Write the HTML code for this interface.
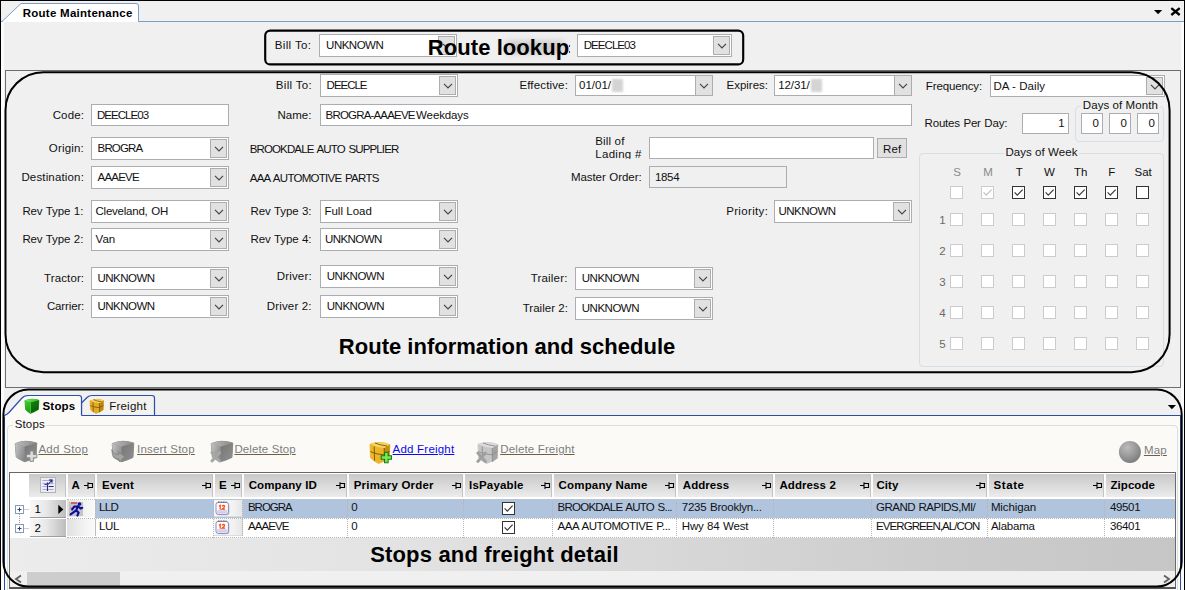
<!DOCTYPE html><html><head><meta charset="utf-8"><title>Route Maintenance</title><style>
html,body{margin:0;padding:0;overflow:hidden}
#w{position:absolute;left:0;top:0;width:1185px;height:590px;overflow:hidden;background:#f0f0f0}
body{width:1185px;height:590px;overflow:hidden;background:#f0f0f0;position:relative;font-family:"Liberation Sans",sans-serif;font-size:11.5px}
#w>div,#w>svg,#w>span{position:absolute;box-sizing:content-box}
span.t{white-space:pre;line-height:1;display:block}
span.u{text-decoration:underline;text-underline-offset:0.6px;text-decoration-thickness:1.2px;text-decoration-color:#6f6040}
span.ub{text-decoration:underline;text-underline-offset:0.6px;text-decoration-thickness:1.2px;text-decoration-color:#0a0af0}
</style></head><body><div id="w">
<div style="left:0;top:0;width:1185px;height:1px;background:#000"></div>
<div style="left:0;top:0;width:1px;height:590px;background:#000"></div>
<div style="left:1px;top:22px;width:3px;height:568px;background:#fcfcfc"></div>
<div style="left:1181px;top:22px;width:3px;height:568px;background:#fcfcfc"></div>
<div style="left:1184px;top:0;width:1px;height:590px;background:#000"></div>
<div style="left:1px;top:21px;width:1183px;height:1px;background:#7d9ec4"></div>
<svg style="left:0;top:0" width="145" height="24" viewBox="0 0 145 24"><path d="M2 21.5 L21 3.5 L136 3.5 Q138.5 3.5 138.5 6 L138.5 21.5" fill="#fff" stroke="#7d9ec4" stroke-width="1"/><rect x="3" y="21" width="135" height="1" fill="#fff"/></svg>
<svg style="left:1150px;top:5px" width="34" height="14" viewBox="0 0 34 14"><path d="M4 5 L12.2 5 L8.1 9.2 Z" fill="#000"/><path d="M21.3 3.2 L29.7 10 M29.7 3.2 L21.3 10" stroke="#000" stroke-width="2.3" fill="none"/></svg>
<div style="left:319px;top:34px;width:136px;height:21px;background:#fff;border:1px solid #abadb3;"></div>
<div style="left:438px;top:36px;width:15px;height:17px;background:#e1e1e1;border:1px solid #adadad;"></div>
<svg style="left:441.5px;top:42.0px" width="10" height="8" viewBox="0 0 10 8"><path d="M1 1.9 L5 5.9 L9 1.9" fill="none" stroke="#444" stroke-width="1.15"/></svg>
<div style="left:577px;top:34px;width:153px;height:21px;background:#fff;border:1px solid #abadb3;"></div>
<div style="left:713px;top:36px;width:15px;height:17px;background:#e1e1e1;border:1px solid #adadad;"></div>
<svg style="left:716.5px;top:42.0px" width="10" height="8" viewBox="0 0 10 8"><path d="M1 1.9 L5 5.9 L9 1.9" fill="none" stroke="#444" stroke-width="1.15"/></svg>
<div style="left:5px;top:70px;width:1174px;height:316px;border:1px solid #6e6e6e"></div>
<div style="left:320px;top:74px;width:136px;height:21px;background:#fff;border:1px solid #abadb3;"></div>
<div style="left:439px;top:76px;width:15px;height:17px;background:#e1e1e1;border:1px solid #adadad;"></div>
<svg style="left:442.5px;top:82.0px" width="10" height="8" viewBox="0 0 10 8"><path d="M1 1.9 L5 5.9 L9 1.9" fill="none" stroke="#444" stroke-width="1.15"/></svg>
<div style="left:575px;top:75px;width:136px;height:19px;background:#fff;border:1px solid #abadb3;"></div>
<div style="left:695px;top:75px;width:16px;height:19px;background:#e1e1e1;border:1px solid #adadad;"></div>
<svg style="left:699.0px;top:82.0px" width="10" height="8" viewBox="0 0 10 8"><path d="M1 1.9 L5 5.9 L9 1.9" fill="none" stroke="#444" stroke-width="1.15"/></svg>
<div style="left:774px;top:75px;width:136px;height:19px;background:#fff;border:1px solid #abadb3;"></div>
<div style="left:894px;top:75px;width:16px;height:19px;background:#e1e1e1;border:1px solid #adadad;"></div>
<svg style="left:898.0px;top:82.0px" width="10" height="8" viewBox="0 0 10 8"><path d="M1 1.9 L5 5.9 L9 1.9" fill="none" stroke="#444" stroke-width="1.15"/></svg>
<div style="left:990px;top:75px;width:173px;height:20px;background:#fff;border:1px solid #abadb3;"></div>
<div style="left:1146px;top:77px;width:15px;height:16px;background:#e1e1e1;border:1px solid #adadad;"></div>
<svg style="left:1149.5px;top:82.5px" width="10" height="8" viewBox="0 0 10 8"><path d="M1 1.9 L5 5.9 L9 1.9" fill="none" stroke="#444" stroke-width="1.15"/></svg>
<div style="left:612px;top:79px;width:11px;height:13px;background:#d4d4d4;filter:blur(1.2px)"></div>
<div style="left:811px;top:79px;width:11px;height:13px;background:#d4d4d4;filter:blur(1.2px)"></div>
<div style="left:91px;top:104px;width:136px;height:20px;background:#fff;border:1px solid #abadb3;"></div>
<div style="left:320px;top:104px;width:590px;height:20px;background:#fff;border:1px solid #abadb3;"></div>
<div style="left:1022px;top:113px;width:45px;height:19px;background:#fff;border:1px solid #abadb3;"></div>
<div style="left:1075px;top:106px;width:87px;height:34px;border:1px solid #d5dfe5;border-radius:4px"></div>
<div style="left:1081px;top:100px;width:79px;height:12px;background:#f0f0f0"></div>
<div style="left:1081px;top:113px;width:20px;height:19px;background:#fff;border:1px solid #abadb3;"></div>
<div style="left:1109px;top:113px;width:20px;height:19px;background:#fff;border:1px solid #abadb3;"></div>
<div style="left:1137px;top:113px;width:20px;height:19px;background:#fff;border:1px solid #abadb3;"></div>
<div style="left:91px;top:137px;width:136px;height:21px;background:#fff;border:1px solid #abadb3;"></div>
<div style="left:210px;top:139px;width:15px;height:17px;background:#e1e1e1;border:1px solid #adadad;"></div>
<svg style="left:213.5px;top:145.0px" width="10" height="8" viewBox="0 0 10 8"><path d="M1 1.9 L5 5.9 L9 1.9" fill="none" stroke="#444" stroke-width="1.15"/></svg>
<div style="left:590px;top:134px;width:56px;height:24.5px;overflow:hidden"></div>
<div style="left:649px;top:137px;width:223px;height:20px;background:#fff;border:1px solid #abadb3;"></div>
<div style="left:877px;top:138px;width:28px;height:18px;background:#e1e1e1;border:1px solid #adadad;"></div>
<div style="left:91px;top:166px;width:136px;height:21px;background:#fff;border:1px solid #abadb3;"></div>
<div style="left:210px;top:168px;width:15px;height:17px;background:#e1e1e1;border:1px solid #adadad;"></div>
<svg style="left:213.5px;top:174.0px" width="10" height="8" viewBox="0 0 10 8"><path d="M1 1.9 L5 5.9 L9 1.9" fill="none" stroke="#444" stroke-width="1.15"/></svg>
<div style="left:649px;top:166px;width:136px;height:20px;background:#f0f0f0;border:1px solid #abadb3;"></div>
<div style="left:91px;top:200px;width:136px;height:21px;background:#fff;border:1px solid #abadb3;"></div>
<div style="left:210px;top:202px;width:15px;height:17px;background:#e1e1e1;border:1px solid #adadad;"></div>
<svg style="left:213.5px;top:208.0px" width="10" height="8" viewBox="0 0 10 8"><path d="M1 1.9 L5 5.9 L9 1.9" fill="none" stroke="#444" stroke-width="1.15"/></svg>
<div style="left:91px;top:228px;width:136px;height:21px;background:#fff;border:1px solid #abadb3;"></div>
<div style="left:210px;top:230px;width:15px;height:17px;background:#e1e1e1;border:1px solid #adadad;"></div>
<svg style="left:213.5px;top:236.0px" width="10" height="8" viewBox="0 0 10 8"><path d="M1 1.9 L5 5.9 L9 1.9" fill="none" stroke="#444" stroke-width="1.15"/></svg>
<div style="left:320px;top:200px;width:136px;height:21px;background:#fff;border:1px solid #abadb3;"></div>
<div style="left:439px;top:202px;width:15px;height:17px;background:#e1e1e1;border:1px solid #adadad;"></div>
<svg style="left:442.5px;top:208.0px" width="10" height="8" viewBox="0 0 10 8"><path d="M1 1.9 L5 5.9 L9 1.9" fill="none" stroke="#444" stroke-width="1.15"/></svg>
<div style="left:320px;top:228px;width:136px;height:21px;background:#fff;border:1px solid #abadb3;"></div>
<div style="left:439px;top:230px;width:15px;height:17px;background:#e1e1e1;border:1px solid #adadad;"></div>
<svg style="left:442.5px;top:236.0px" width="10" height="8" viewBox="0 0 10 8"><path d="M1 1.9 L5 5.9 L9 1.9" fill="none" stroke="#444" stroke-width="1.15"/></svg>
<div style="left:774px;top:200px;width:136px;height:21px;background:#fff;border:1px solid #abadb3;"></div>
<div style="left:893px;top:202px;width:15px;height:17px;background:#e1e1e1;border:1px solid #adadad;"></div>
<svg style="left:896.5px;top:208.0px" width="10" height="8" viewBox="0 0 10 8"><path d="M1 1.9 L5 5.9 L9 1.9" fill="none" stroke="#444" stroke-width="1.15"/></svg>
<div style="left:91px;top:267px;width:136px;height:21px;background:#fff;border:1px solid #abadb3;"></div>
<div style="left:210px;top:269px;width:15px;height:17px;background:#e1e1e1;border:1px solid #adadad;"></div>
<svg style="left:213.5px;top:275.0px" width="10" height="8" viewBox="0 0 10 8"><path d="M1 1.9 L5 5.9 L9 1.9" fill="none" stroke="#444" stroke-width="1.15"/></svg>
<div style="left:91px;top:295px;width:136px;height:21px;background:#fff;border:1px solid #abadb3;"></div>
<div style="left:210px;top:297px;width:15px;height:17px;background:#e1e1e1;border:1px solid #adadad;"></div>
<svg style="left:213.5px;top:303.0px" width="10" height="8" viewBox="0 0 10 8"><path d="M1 1.9 L5 5.9 L9 1.9" fill="none" stroke="#444" stroke-width="1.15"/></svg>
<div style="left:320px;top:265px;width:136px;height:21px;background:#fff;border:1px solid #abadb3;"></div>
<div style="left:439px;top:267px;width:15px;height:17px;background:#e1e1e1;border:1px solid #adadad;"></div>
<svg style="left:442.5px;top:273.0px" width="10" height="8" viewBox="0 0 10 8"><path d="M1 1.9 L5 5.9 L9 1.9" fill="none" stroke="#444" stroke-width="1.15"/></svg>
<div style="left:320px;top:295px;width:136px;height:21px;background:#fff;border:1px solid #abadb3;"></div>
<div style="left:439px;top:297px;width:15px;height:17px;background:#e1e1e1;border:1px solid #adadad;"></div>
<svg style="left:442.5px;top:303.0px" width="10" height="8" viewBox="0 0 10 8"><path d="M1 1.9 L5 5.9 L9 1.9" fill="none" stroke="#444" stroke-width="1.15"/></svg>
<div style="left:575px;top:267px;width:136px;height:21px;background:#fff;border:1px solid #abadb3;"></div>
<div style="left:694px;top:269px;width:15px;height:17px;background:#e1e1e1;border:1px solid #adadad;"></div>
<svg style="left:697.5px;top:275.0px" width="10" height="8" viewBox="0 0 10 8"><path d="M1 1.9 L5 5.9 L9 1.9" fill="none" stroke="#444" stroke-width="1.15"/></svg>
<div style="left:575px;top:297px;width:136px;height:21px;background:#fff;border:1px solid #abadb3;"></div>
<div style="left:694px;top:299px;width:15px;height:17px;background:#e1e1e1;border:1px solid #adadad;"></div>
<svg style="left:697.5px;top:305.0px" width="10" height="8" viewBox="0 0 10 8"><path d="M1 1.9 L5 5.9 L9 1.9" fill="none" stroke="#444" stroke-width="1.15"/></svg>
<div style="left:919px;top:153px;width:243px;height:212px;border:1px solid #d5dfe5;border-radius:4px"></div>
<div style="left:1004px;top:148px;width:75px;height:12px;background:#f0f0f0"></div>
<div style="left:950px;top:186px;width:11px;height:11px;background:#fff;border:1px solid #cccccc"></div>
<div style="left:981px;top:186px;width:11px;height:11px;background:#fff;border:1px solid #cccccc"></div>
<svg style="left:981px;top:186px" width="13" height="13" viewBox="0 0 13 13"><path d="M2.6 6.4 L5.3 9.2 L10.6 3.6" fill="none" stroke="#c0c0c0" stroke-width="1.2"/></svg>
<div style="left:1012px;top:186px;width:11px;height:11px;background:#fff;border:1px solid #333333"></div>
<svg style="left:1012px;top:186px" width="13" height="13" viewBox="0 0 13 13"><path d="M2.6 6.4 L5.3 9.2 L10.6 3.6" fill="none" stroke="#3a3a3a" stroke-width="1.2"/></svg>
<div style="left:1043px;top:186px;width:11px;height:11px;background:#fff;border:1px solid #333333"></div>
<svg style="left:1043px;top:186px" width="13" height="13" viewBox="0 0 13 13"><path d="M2.6 6.4 L5.3 9.2 L10.6 3.6" fill="none" stroke="#3a3a3a" stroke-width="1.2"/></svg>
<div style="left:1074px;top:186px;width:11px;height:11px;background:#fff;border:1px solid #333333"></div>
<svg style="left:1074px;top:186px" width="13" height="13" viewBox="0 0 13 13"><path d="M2.6 6.4 L5.3 9.2 L10.6 3.6" fill="none" stroke="#3a3a3a" stroke-width="1.2"/></svg>
<div style="left:1105px;top:186px;width:11px;height:11px;background:#fff;border:1px solid #333333"></div>
<svg style="left:1105px;top:186px" width="13" height="13" viewBox="0 0 13 13"><path d="M2.6 6.4 L5.3 9.2 L10.6 3.6" fill="none" stroke="#3a3a3a" stroke-width="1.2"/></svg>
<div style="left:1136px;top:186px;width:11px;height:11px;background:#fff;border:1px solid #333333"></div>
<div style="left:950px;top:213px;width:11px;height:11px;background:#fff;border:1px solid #cccccc"></div>
<div style="left:981px;top:213px;width:11px;height:11px;background:#fff;border:1px solid #cccccc"></div>
<div style="left:1012px;top:213px;width:11px;height:11px;background:#fff;border:1px solid #cccccc"></div>
<div style="left:1043px;top:213px;width:11px;height:11px;background:#fff;border:1px solid #cccccc"></div>
<div style="left:1074px;top:213px;width:11px;height:11px;background:#fff;border:1px solid #cccccc"></div>
<div style="left:1105px;top:213px;width:11px;height:11px;background:#fff;border:1px solid #cccccc"></div>
<div style="left:1136px;top:213px;width:11px;height:11px;background:#fff;border:1px solid #cccccc"></div>
<div style="left:950px;top:244px;width:11px;height:11px;background:#fff;border:1px solid #cccccc"></div>
<div style="left:981px;top:244px;width:11px;height:11px;background:#fff;border:1px solid #cccccc"></div>
<div style="left:1012px;top:244px;width:11px;height:11px;background:#fff;border:1px solid #cccccc"></div>
<div style="left:1043px;top:244px;width:11px;height:11px;background:#fff;border:1px solid #cccccc"></div>
<div style="left:1074px;top:244px;width:11px;height:11px;background:#fff;border:1px solid #cccccc"></div>
<div style="left:1105px;top:244px;width:11px;height:11px;background:#fff;border:1px solid #cccccc"></div>
<div style="left:1136px;top:244px;width:11px;height:11px;background:#fff;border:1px solid #cccccc"></div>
<div style="left:950px;top:275px;width:11px;height:11px;background:#fff;border:1px solid #cccccc"></div>
<div style="left:981px;top:275px;width:11px;height:11px;background:#fff;border:1px solid #cccccc"></div>
<div style="left:1012px;top:275px;width:11px;height:11px;background:#fff;border:1px solid #cccccc"></div>
<div style="left:1043px;top:275px;width:11px;height:11px;background:#fff;border:1px solid #cccccc"></div>
<div style="left:1074px;top:275px;width:11px;height:11px;background:#fff;border:1px solid #cccccc"></div>
<div style="left:1105px;top:275px;width:11px;height:11px;background:#fff;border:1px solid #cccccc"></div>
<div style="left:1136px;top:275px;width:11px;height:11px;background:#fff;border:1px solid #cccccc"></div>
<div style="left:950px;top:306px;width:11px;height:11px;background:#fff;border:1px solid #cccccc"></div>
<div style="left:981px;top:306px;width:11px;height:11px;background:#fff;border:1px solid #cccccc"></div>
<div style="left:1012px;top:306px;width:11px;height:11px;background:#fff;border:1px solid #cccccc"></div>
<div style="left:1043px;top:306px;width:11px;height:11px;background:#fff;border:1px solid #cccccc"></div>
<div style="left:1074px;top:306px;width:11px;height:11px;background:#fff;border:1px solid #cccccc"></div>
<div style="left:1105px;top:306px;width:11px;height:11px;background:#fff;border:1px solid #cccccc"></div>
<div style="left:1136px;top:306px;width:11px;height:11px;background:#fff;border:1px solid #cccccc"></div>
<div style="left:950px;top:337px;width:11px;height:11px;background:#fff;border:1px solid #cccccc"></div>
<div style="left:981px;top:337px;width:11px;height:11px;background:#fff;border:1px solid #cccccc"></div>
<div style="left:1012px;top:337px;width:11px;height:11px;background:#fff;border:1px solid #cccccc"></div>
<div style="left:1043px;top:337px;width:11px;height:11px;background:#fff;border:1px solid #cccccc"></div>
<div style="left:1074px;top:337px;width:11px;height:11px;background:#fff;border:1px solid #cccccc"></div>
<div style="left:1105px;top:337px;width:11px;height:11px;background:#fff;border:1px solid #cccccc"></div>
<div style="left:1136px;top:337px;width:11px;height:11px;background:#fff;border:1px solid #cccccc"></div>
<div style="left:506px;top:41px;width:58px;height:13px;background:#bdbdbd;filter:blur(3px);opacity:0.75"></div>
<div style="left:568.5px;top:44.5px;width:1.6px;height:2px;background:#2a3a9a"></div><div style="left:568.5px;top:50.5px;width:1.6px;height:2px;background:#2a3a9a"></div>
<div style="left:5px;top:415px;width:1177px;height:175px;background:#fbfaf7"></div>
<div style="left:4px;top:415px;width:1px;height:175px;background:#2b4fa0"></div>
<div style="left:1180px;top:415px;width:1px;height:175px;background:#2b4fa0"></div>
<div style="left:4px;top:415px;width:1177px;height:1px;background:#2b4fa0"></div>
<svg style="left:0px;top:392px" width="170" height="26" viewBox="0 392 170 26">
<path d="M81.5 403 Q85 399.5 87 397.5 Q89 395.5 92 395.5 L152 395.5 Q154.5 395.5 154.5 398 L154.5 415.5 L81.5 415.5 Z" fill="#f3f2ee" stroke="#2b4db0" stroke-width="1.2"/>
<path d="M4.5 417 L4.5 415.5 Q7 414.5 9 412.5 L21.5 398.5 Q24 395.5 28 395.5 L79 395.5 Q81.5 395.5 81.5 398 L81.5 417 Z" fill="#fbfaf7"/>
<path d="M4.5 415.5 Q7 414.5 9 412.5 L21.5 398.5 Q24 395.5 28 395.5 L79 395.5 Q81.5 395.5 81.5 398 L81.5 415.5" fill="none" stroke="#2b4db0" stroke-width="1.2"/>
</svg>
<svg style="left:24px;top:398px" width="16" height="16" viewBox="0 0 16 16">
<defs><linearGradient id="gL" x1="0" y1="0" x2="0.3" y2="1"><stop offset="0" stop-color="#46d436"/><stop offset="1" stop-color="#1c9a10"/></linearGradient>
<linearGradient id="gR" x1="0" y1="0" x2="0.6" y2="1"><stop offset="0" stop-color="#128a0a"/><stop offset="1" stop-color="#075c04"/></linearGradient>
<linearGradient id="gT" x1="0" y1="0" x2="1" y2="0.4"><stop offset="0" stop-color="#8cf07a"/><stop offset="1" stop-color="#2fb822"/></linearGradient></defs>
<path d="M0.9 2.6 Q8 -0.2 15 2.2 L14.4 11.6 Q10.5 14.2 6.4 15.4 Q3 13.6 1.6 11.6 Z" fill="#1a9a10" stroke="#1a9a10" stroke-width="0.6" stroke-linejoin="round"/>
<path d="M6.2 4.6 L15 2.2 L14.4 11.6 L6.4 15.4 Z" fill="url(#gR)"/>
<path d="M0.9 2.6 L6.2 4.6 L6.4 15.4 L1.6 11.6 Z" fill="url(#gL)"/>
<path d="M0.9 2.6 Q8 -0.2 15 2.2 L6.2 4.6 Z" fill="url(#gT)"/>
<path d="M6.3 4.8 L6.4 15" stroke="#7cf06a" stroke-width="0.7" opacity="0.8"/>
</svg>
<svg style="left:88.5px;top:398px" width="16" height="16" viewBox="0 0 16 16">
<path d="M0.9 2.8 Q8 -0.2 14.6 2.6 L14.2 11.8 Q10.5 14.4 7 15.6 Q3.5 14 1.6 11.8 Z" fill="#e4aa22" stroke="#e4aa22" stroke-width="0.6" stroke-linejoin="round"/>
<path d="M10.4 5.2 L14.6 2.6 L14.2 11.8 L10.6 14.2 Z" fill="#c08612"/>
<path d="M0.9 2.8 Q8 -0.2 14.6 2.6 L10.4 5.2 Q5 5 0.9 2.8 Z" fill="#f4cf58"/>
<path d="M4 4.2 L4.3 13.6 M10.4 5.2 L10.6 14.2 M1.2 7.6 Q6 9.6 10.5 9.6 L14.4 7.4 M4.6 1.6 Q8 3.4 12.6 3.8" stroke="#6e5410" stroke-width="0.9" fill="none" opacity="0.85"/>
</svg>
<svg style="left:1166px;top:403px" width="12" height="8" viewBox="0 0 12 8"><path d="M1.8 2 L10 2 L5.9 6.2 Z" fill="#000"/></svg>
<div style="left:7px;top:425px;width:1169px;height:170px;border:1px solid #d5dfe5;border-radius:4px"></div>
<div style="left:13px;top:419px;width:33px;height:12px;background:#fbfaf7"></div>
<svg style="left:14px;top:439px" width="24" height="25" viewBox="0 0 24 25"><defs><linearGradient id="ctadd" x1="0" y1="0" x2="1" y2="0"><stop offset="0" stop-color="#bcbcbc"/><stop offset="1" stop-color="#888"/></linearGradient><linearGradient id="cladd" x1="0" y1="0" x2="1" y2="0.6"><stop offset="0" stop-color="#c6c6c6"/><stop offset="1" stop-color="#8a8a8a"/></linearGradient><linearGradient id="cradd" x1="0" y1="0" x2="1" y2="1"><stop offset="0" stop-color="#767676"/><stop offset="1" stop-color="#909090"/></linearGradient></defs><path d="M1.2 4.6 Q11 0.2 22.8 4 L22 18.4 Q16 21.5 10.6 22.8 Q5 20.5 2.2 18 Z" fill="#8a8a8a" stroke="#8a8a8a" stroke-width="0.8" stroke-linejoin="round"/><path d="M10.5 7.5 L22.8 4 L22 18.4 L10.6 22.8 Z" fill="url(#cradd)"/><path d="M1.2 4.6 L10.5 7.5 L10.6 22.8 L2.2 18 Z" fill="url(#cladd)"/><path d="M1.2 4.6 Q11 0 22.8 4 L10.5 7.5 Z" fill="url(#ctadd)"/><path d="M16 12 h3.4 v3.4 h3.5 v3.4 h-3.5 v3.6 h-3.4 v-3.6 h-3.5 v-3.4 h3.5 Z" fill="#dcdcdc" stroke="#8c8c8c" stroke-width="1"/></svg>
<svg style="left:111px;top:439px" width="24" height="25" viewBox="0 0 24 25"><defs><linearGradient id="ctins" x1="0" y1="0" x2="1" y2="0"><stop offset="0" stop-color="#bcbcbc"/><stop offset="1" stop-color="#888"/></linearGradient><linearGradient id="clins" x1="0" y1="0" x2="1" y2="0.6"><stop offset="0" stop-color="#c6c6c6"/><stop offset="1" stop-color="#8a8a8a"/></linearGradient><linearGradient id="crins" x1="0" y1="0" x2="1" y2="1"><stop offset="0" stop-color="#767676"/><stop offset="1" stop-color="#909090"/></linearGradient></defs><path d="M1.2 4.6 Q11 0.2 22.8 4 L22 18.4 Q16 21.5 10.6 22.8 Q5 20.5 2.2 18 Z" fill="#8a8a8a" stroke="#8a8a8a" stroke-width="0.8" stroke-linejoin="round"/><path d="M10.5 7.5 L22.8 4 L22 18.4 L10.6 22.8 Z" fill="url(#crins)"/><path d="M1.2 4.6 L10.5 7.5 L10.6 22.8 L2.2 18 Z" fill="url(#clins)"/><path d="M1.2 4.6 Q11 0 22.8 4 L10.5 7.5 Z" fill="url(#ctins)"/><path d="M0.8 10.5 Q2.5 15.5 7.5 15.8 L7.2 12.8 L13.8 17.6 L8.4 23 L8 20.2 Q1 20.5 0.8 10.5 Z" fill="#a4a4a4" stroke="#7c7c7c" stroke-width="0.7"/></svg>
<svg style="left:210px;top:439px" width="24" height="25" viewBox="0 0 24 25"><defs><linearGradient id="ctdel" x1="0" y1="0" x2="1" y2="0"><stop offset="0" stop-color="#bcbcbc"/><stop offset="1" stop-color="#888"/></linearGradient><linearGradient id="cldel" x1="0" y1="0" x2="1" y2="0.6"><stop offset="0" stop-color="#c6c6c6"/><stop offset="1" stop-color="#8a8a8a"/></linearGradient><linearGradient id="crdel" x1="0" y1="0" x2="1" y2="1"><stop offset="0" stop-color="#767676"/><stop offset="1" stop-color="#909090"/></linearGradient></defs><path d="M1.2 4.6 Q11 0.2 22.8 4 L22 18.4 Q16 21.5 10.6 22.8 Q5 20.5 2.2 18 Z" fill="#8a8a8a" stroke="#8a8a8a" stroke-width="0.8" stroke-linejoin="round"/><path d="M10.5 7.5 L22.8 4 L22 18.4 L10.6 22.8 Z" fill="url(#crdel)"/><path d="M1.2 4.6 L10.5 7.5 L10.6 22.8 L2.2 18 Z" fill="url(#cldel)"/><path d="M1.2 4.6 Q11 0 22.8 4 L10.5 7.5 Z" fill="url(#ctdel)"/><path d="M2 13.5 L9.5 22 M9.5 13.5 L2 22" stroke="#a6a6a6" stroke-width="3" stroke-linecap="round"/></svg>
<svg style="left:369px;top:439.5px" width="24" height="25" viewBox="0 0 24 25"><path d="M1 4.2 Q11 0.6 20.8 4.6 L20.4 18.2 Q15 21.6 9.6 23.6 Q4.5 21 1.6 18 Z" fill="#ecb426" stroke="#ecb426" stroke-width="0.8" stroke-linejoin="round"/><path d="M15.2 8 L20.8 4.6 L20.4 18.2 L15.4 22 Z" fill="#c88e14"/><path d="M1 4.2 Q11 0.6 20.8 4.6 L15.2 8 Q8 7.6 1 4.2 Z" fill="#f6d45e"/><path d="M5.2 6.4 L5.6 20.6 M15.2 8 L15.4 22 M1.3 11.6 Q8 14.6 15.3 14.8 L20.6 11.2 M6 3 Q11 5.2 18.2 6" stroke="#6a5210" stroke-width="1" fill="none" opacity="0.85"/></svg>
<svg style="left:380px;top:451px" width="13" height="13" viewBox="0 0 13 13"><path d="M4.6 1.3 h3.5 v3.4 h3.4 v3.5 h-3.4 v3.5 h-3.5 v-3.5 h-3.4 v-3.5 h3.4 Z" fill="#86e45a" stroke="#0f7f0f" stroke-width="1.1"/></svg>
<svg style="left:477px;top:439.5px" width="24" height="25" viewBox="0 0 24 25"><path d="M1 4.2 Q11 0.6 20.8 4.6 L20.4 18.2 Q15 21.6 9.6 23.6 Q4.5 21 1.6 18 Z" fill="#c6c6c6" stroke="#c6c6c6" stroke-width="0.8" stroke-linejoin="round"/><path d="M15.2 8 L20.8 4.6 L20.4 18.2 L15.4 22 Z" fill="#a4a4a4"/><path d="M1 4.2 Q11 0.6 20.8 4.6 L15.2 8 Q8 7.6 1 4.2 Z" fill="#dcdcdc"/><path d="M5.2 6.4 L5.6 20.6 M15.2 8 L15.4 22 M1.3 11.6 Q8 14.6 15.3 14.8 L20.6 11.2 M6 3 Q11 5.2 18.2 6" stroke="#8a8a8a" stroke-width="1" fill="none" opacity="0.85"/></svg>
<svg style="left:476px;top:451px" width="12" height="12" viewBox="0 0 12 12"><path d="M1.8 2 L9.5 10.5 M9.5 2 L1.8 10.5" stroke="#a0a0a0" stroke-width="2.8" stroke-linecap="round"/></svg>
<svg style="left:1118px;top:440px" width="24" height="24" viewBox="0 0 24 24"><defs><radialGradient id="mg" cx="0.38" cy="0.3" r="0.72"><stop offset="0" stop-color="#bcbcbc"/><stop offset="0.55" stop-color="#9a9a9a"/><stop offset="1" stop-color="#7c7c7c"/></radialGradient></defs><circle cx="11.9" cy="12" r="11" fill="url(#mg)"/></svg>
<div style="left:9px;top:472px;width:1167px;height:116px;background:#fff"></div>
<div style="left:10px;top:538px;width:1165px;height:33px;background:linear-gradient(90deg,#ececec 0%,#e2e2e2 35%,#cccccc 80%,#c6c6c6 100%)"></div>
<div style="left:29px;top:474px;width:1146px;height:23px;background:linear-gradient(180deg,#c9c9c9 0%,#d6d6d6 40%,#ececec 100%)"></div>
<div style="left:9px;top:472px;width:1167px;height:1px;background:#666"></div>
<div style="left:9px;top:472px;width:1px;height:116px;background:#6a6a6a"></div>
<div style="left:1175px;top:472px;width:1px;height:116px;background:#6a6a6a"></div>
<div style="left:9px;top:587px;width:1167px;height:2px;background:#555"></div>
<div style="left:65px;top:474px;width:1px;height:23px;background:#c2c2c2"></div>
<div style="left:66px;top:474px;width:2px;height:23px;background:#fbfbfb"></div>
<div style="left:94px;top:474px;width:1px;height:23px;background:#c2c2c2"></div>
<div style="left:95px;top:474px;width:2px;height:23px;background:#fbfbfb"></div>
<svg style="left:84px;top:482px" width="10" height="8" viewBox="0 0 10 8"><path d="M0 3.5 H3.5 M4 0.3 V7 M4 1.5 H8.5 V5.5 H4" stroke="#000" stroke-width="1.1" fill="none"/></svg>
<div style="left:212px;top:474px;width:1px;height:23px;background:#c2c2c2"></div>
<div style="left:213px;top:474px;width:2px;height:23px;background:#fbfbfb"></div>
<svg style="left:202px;top:482px" width="10" height="8" viewBox="0 0 10 8"><path d="M0 3.5 H3.5 M4 0.3 V7 M4 1.5 H8.5 V5.5 H4" stroke="#000" stroke-width="1.1" fill="none"/></svg>
<div style="left:241px;top:474px;width:1px;height:23px;background:#c2c2c2"></div>
<div style="left:242px;top:474px;width:2px;height:23px;background:#fbfbfb"></div>
<svg style="left:231px;top:482px" width="10" height="8" viewBox="0 0 10 8"><path d="M0 3.5 H3.5 M4 0.3 V7 M4 1.5 H8.5 V5.5 H4" stroke="#000" stroke-width="1.1" fill="none"/></svg>
<div style="left:346px;top:474px;width:1px;height:23px;background:#c2c2c2"></div>
<div style="left:347px;top:474px;width:2px;height:23px;background:#fbfbfb"></div>
<svg style="left:336px;top:482px" width="10" height="8" viewBox="0 0 10 8"><path d="M0 3.5 H3.5 M4 0.3 V7 M4 1.5 H8.5 V5.5 H4" stroke="#000" stroke-width="1.1" fill="none"/></svg>
<div style="left:462px;top:474px;width:1px;height:23px;background:#c2c2c2"></div>
<div style="left:463px;top:474px;width:2px;height:23px;background:#fbfbfb"></div>
<svg style="left:452px;top:482px" width="10" height="8" viewBox="0 0 10 8"><path d="M0 3.5 H3.5 M4 0.3 V7 M4 1.5 H8.5 V5.5 H4" stroke="#000" stroke-width="1.1" fill="none"/></svg>
<div style="left:551px;top:474px;width:1px;height:23px;background:#c2c2c2"></div>
<div style="left:552px;top:474px;width:2px;height:23px;background:#fbfbfb"></div>
<svg style="left:541px;top:482px" width="10" height="8" viewBox="0 0 10 8"><path d="M0 3.5 H3.5 M4 0.3 V7 M4 1.5 H8.5 V5.5 H4" stroke="#000" stroke-width="1.1" fill="none"/></svg>
<div style="left:675px;top:474px;width:1px;height:23px;background:#c2c2c2"></div>
<div style="left:676px;top:474px;width:2px;height:23px;background:#fbfbfb"></div>
<svg style="left:665px;top:482px" width="10" height="8" viewBox="0 0 10 8"><path d="M0 3.5 H3.5 M4 0.3 V7 M4 1.5 H8.5 V5.5 H4" stroke="#000" stroke-width="1.1" fill="none"/></svg>
<div style="left:772px;top:474px;width:1px;height:23px;background:#c2c2c2"></div>
<div style="left:773px;top:474px;width:2px;height:23px;background:#fbfbfb"></div>
<svg style="left:762px;top:482px" width="10" height="8" viewBox="0 0 10 8"><path d="M0 3.5 H3.5 M4 0.3 V7 M4 1.5 H8.5 V5.5 H4" stroke="#000" stroke-width="1.1" fill="none"/></svg>
<div style="left:870px;top:474px;width:1px;height:23px;background:#c2c2c2"></div>
<div style="left:871px;top:474px;width:2px;height:23px;background:#fbfbfb"></div>
<svg style="left:860px;top:482px" width="10" height="8" viewBox="0 0 10 8"><path d="M0 3.5 H3.5 M4 0.3 V7 M4 1.5 H8.5 V5.5 H4" stroke="#000" stroke-width="1.1" fill="none"/></svg>
<div style="left:986px;top:474px;width:1px;height:23px;background:#c2c2c2"></div>
<div style="left:987px;top:474px;width:2px;height:23px;background:#fbfbfb"></div>
<svg style="left:976px;top:482px" width="10" height="8" viewBox="0 0 10 8"><path d="M0 3.5 H3.5 M4 0.3 V7 M4 1.5 H8.5 V5.5 H4" stroke="#000" stroke-width="1.1" fill="none"/></svg>
<div style="left:1103px;top:474px;width:1px;height:23px;background:#c2c2c2"></div>
<div style="left:1104px;top:474px;width:2px;height:23px;background:#fbfbfb"></div>
<svg style="left:1093px;top:482px" width="10" height="8" viewBox="0 0 10 8"><path d="M0 3.5 H3.5 M4 0.3 V7 M4 1.5 H8.5 V5.5 H4" stroke="#000" stroke-width="1.1" fill="none"/></svg>
<svg style="left:40px;top:477px" width="17" height="17" viewBox="0 0 17 17"><rect x="0.5" y="0.5" width="15" height="15" fill="#ececf6" stroke="#b4b4b4"/><path d="M2.5 3.5 H13.5 M2.5 6.5 H13.5 M2.5 9.5 H13.5 M2.5 12.5 H13.5" stroke="#a9a9dc" stroke-width="1"/><path d="M7.5 14 V5.5 M4.5 7.5 L8.5 7 L11.5 3.5 M9 3 L12 2.8 L12 5.8 M9 9.5 H13.5" stroke="#2a2a7a" stroke-width="1.1" fill="none"/></svg>
<div style="left:96px;top:499px;width:1079px;height:19px;background:#b0c4de"></div>
<div style="left:30px;top:500px;width:36px;height:17px;background:linear-gradient(90deg,#f8f8f8 0%,#e8e8e8 45%,#bcbcbc 100%);border-bottom:1px solid #9c9c9c"></div>
<div style="left:67px;top:500px;width:28px;height:17px;background:linear-gradient(90deg,#e0e0e0 0%,#f2f2f2 60%,#fafafa 100%);border-right:1px solid #c8c8c8"></div>
<div style="left:214px;top:500px;width:28px;height:16px;background:linear-gradient(90deg,#f8f8f8 0%,#f2f2f2 70%,#e6e6e6 100%);border-right:1px solid #d4d4d4;border-bottom:1px solid #dcdcdc"></div>
<svg style="left:215px;top:501px" width="16" height="15" viewBox="0 0 16 15"><rect x="1.8" y="2.2" width="12.6" height="12" rx="2.2" fill="#55557a" opacity="0.35"/><rect x="1" y="1.4" width="12.4" height="12" rx="2.2" fill="#fff" stroke="#8a88c2" stroke-width="1"/><path d="M3 1.2 H11.6" stroke="#74747c" stroke-width="1.5" stroke-dasharray="1.6 0.9"/><rect x="2.2" y="9.3" width="10" height="3.1" fill="#c6c4ee"/><path d="M2.2 10.9 H12.2" stroke="#e8e6fb" stroke-width="0.7"/><path d="M4 5.3 L5.2 4.5 V8.4 M7 5.3 Q8.2 3.9 9.6 5 Q10 6.1 7.1 8.2 H10.2" stroke="#ff4610" stroke-width="1.25" fill="none"/></svg>
<svg style="left:13px;top:503px" width="18" height="12" viewBox="0 0 18 12"><path d="M11.5 6.5 H16" stroke="#9a9a9a" stroke-width="1" stroke-dasharray="1 1"/><rect x="2.5" y="2.5" width="8" height="8" fill="#fff" stroke="#8a9bb0"/><path d="M4.5 6.5 H8.5 M6.5 4.5 V8.5" stroke="#2a3f9a" stroke-width="1"/></svg>
<div style="left:502px;top:502px;width:11px;height:11px;background:#fff;border:1px solid #333333"></div>
<svg style="left:502px;top:502px" width="13" height="13" viewBox="0 0 13 13"><path d="M2.6 6.4 L5.3 9.2 L10.6 3.6" fill="none" stroke="#3a3a3a" stroke-width="1.2"/></svg>
<div style="left:30px;top:519px;width:36px;height:17px;background:linear-gradient(90deg,#f8f8f8 0%,#e8e8e8 45%,#bcbcbc 100%);border-bottom:1px solid #9c9c9c"></div>
<div style="left:67px;top:519px;width:28px;height:17px;background:linear-gradient(90deg,#e0e0e0 0%,#f2f2f2 60%,#fafafa 100%);border-right:1px solid #c8c8c8"></div>
<div style="left:214px;top:519px;width:28px;height:16px;background:linear-gradient(90deg,#f8f8f8 0%,#f2f2f2 70%,#e6e6e6 100%);border-right:1px solid #d4d4d4;border-bottom:1px solid #dcdcdc"></div>
<svg style="left:215px;top:520px" width="16" height="15" viewBox="0 0 16 15"><rect x="1.8" y="2.2" width="12.6" height="12" rx="2.2" fill="#55557a" opacity="0.35"/><rect x="1" y="1.4" width="12.4" height="12" rx="2.2" fill="#fff" stroke="#8a88c2" stroke-width="1"/><path d="M3 1.2 H11.6" stroke="#74747c" stroke-width="1.5" stroke-dasharray="1.6 0.9"/><rect x="2.2" y="9.3" width="10" height="3.1" fill="#c6c4ee"/><path d="M2.2 10.9 H12.2" stroke="#e8e6fb" stroke-width="0.7"/><path d="M4 5.3 L5.2 4.5 V8.4 M7 5.3 Q8.2 3.9 9.6 5 Q10 6.1 7.1 8.2 H10.2" stroke="#ff4610" stroke-width="1.25" fill="none"/></svg>
<svg style="left:13px;top:522px" width="18" height="12" viewBox="0 0 18 12"><path d="M11.5 6.5 H16" stroke="#9a9a9a" stroke-width="1" stroke-dasharray="1 1"/><rect x="2.5" y="2.5" width="8" height="8" fill="#fff" stroke="#8a9bb0"/><path d="M4.5 6.5 H8.5 M6.5 4.5 V8.5" stroke="#2a3f9a" stroke-width="1"/></svg>
<div style="left:502px;top:521px;width:11px;height:11px;background:#fff;border:1px solid #333333"></div>
<svg style="left:502px;top:521px" width="13" height="13" viewBox="0 0 13 13"><path d="M2.6 6.4 L5.3 9.2 L10.6 3.6" fill="none" stroke="#3a3a3a" stroke-width="1.2"/></svg>
<div style="left:19px;top:514px;width:1px;height:9px;border-left:1px dotted #9a9a9a"></div>
<svg style="left:57px;top:504px" width="8" height="11" viewBox="0 0 8 11"><path d="M1.3 0.8 L6.3 5.4 L1.3 10 Z" fill="#000"/></svg>
<svg style="left:68px;top:501px" width="16" height="16" viewBox="0 0 16 16"><rect x="1" y="1" width="14" height="14" fill="#c4c4c4"/><path d="M3 2 H9" stroke="#e02020" stroke-width="1.2"/><path d="M2 7 H4" stroke="#e06060" stroke-width="1"/><circle cx="11.5" cy="3" r="1.8" fill="#0c0c9c"/><path d="M10 5.2 L6.2 5.6 L4.2 8.4 M10 5.2 L8.2 9.4 L10.6 11.6 L9.4 14.6 M8.2 9.4 L5.4 11.4 L2.6 13.4 M10 5.2 L12.6 7.6 L14.2 6.8" stroke="#0c0c9c" stroke-width="2.1" fill="none" stroke-linecap="round" stroke-linejoin="round"/></svg>
<div style="left:95px;top:499px;width:0;height:39px;border-left:1px dotted #b4b4b4"></div>
<div style="left:213px;top:499px;width:0;height:39px;border-left:1px dotted #b4b4b4"></div>
<div style="left:242px;top:499px;width:0;height:39px;border-left:1px dotted #b4b4b4"></div>
<div style="left:347px;top:499px;width:0;height:39px;border-left:1px dotted #b4b4b4"></div>
<div style="left:463px;top:499px;width:0;height:39px;border-left:1px dotted #b4b4b4"></div>
<div style="left:552px;top:499px;width:0;height:39px;border-left:1px dotted #b4b4b4"></div>
<div style="left:676px;top:499px;width:0;height:39px;border-left:1px dotted #b4b4b4"></div>
<div style="left:773px;top:499px;width:0;height:39px;border-left:1px dotted #b4b4b4"></div>
<div style="left:871px;top:499px;width:0;height:39px;border-left:1px dotted #b4b4b4"></div>
<div style="left:987px;top:499px;width:0;height:39px;border-left:1px dotted #b4b4b4"></div>
<div style="left:1104px;top:499px;width:0;height:39px;border-left:1px dotted #b4b4b4"></div>
<div style="left:67px;top:499px;width:1108px;height:0;border-top:1px dotted #c4c4c4"></div>
<div style="left:67px;top:518px;width:1108px;height:0;border-top:1px dotted #b4b4b4"></div>
<div style="left:67px;top:537px;width:1108px;height:0;border-top:1px dotted #b4b4b4"></div>
<div style="left:10px;top:571px;width:1165px;height:16px;background:#f0f0f0"></div>
<div style="left:27px;top:572px;width:93px;height:14px;background:#cdcdcd"></div>
<svg style="left:14px;top:574px" width="9" height="10" viewBox="0 0 9 10"><path d="M7 1.5 L2 5 L7 8.5" stroke="#606060" stroke-width="1.8" fill="none"/></svg>
<svg style="left:1162px;top:574px" width="9" height="10" viewBox="0 0 9 10"><path d="M2 1.5 L7 5 L2 8.5" stroke="#606060" stroke-width="1.8" fill="none"/></svg>
<span id="t0" class="t" style="top:8px;font-size:11.5px;color:#000;font-weight:bold;letter-spacing:0.263px;left:22.70px;">Route Maintenance</span>
<span id="t1" class="t" style="top:40px;font-size:11.5px;color:#111;letter-spacing:0.379px;left:274.70px;">Bill To:</span>
<span id="t2" class="t" style="top:40px;font-size:11.5px;color:#111;letter-spacing:-0.500px;left:326.10px;">UNKNOWN</span>
<span id="t3" class="t" style="top:40px;font-size:11.5px;color:#111;letter-spacing:-0.939px;left:583.70px;">DEECLE03</span>
<span id="t4" class="t" style="top:80px;font-size:11.5px;color:#111;letter-spacing:0.316px;left:275.80px;">Bill To:</span>
<span id="t5" class="t" style="top:80px;font-size:11.5px;color:#111;letter-spacing:-1.022px;left:326.60px;">DEECLE</span>
<span id="t6" class="t" style="top:80px;font-size:11.5px;color:#111;letter-spacing:0.151px;left:519.40px;">Effective:</span>
<span id="t7" class="t" style="top:80px;font-size:11.5px;color:#111;letter-spacing:0.019px;left:579.00px;">01/01/</span>
<span id="t8" class="t" style="top:80px;font-size:11.5px;color:#111;letter-spacing:-0.031px;left:726.60px;">Expires:</span>
<span id="t9" class="t" style="top:80px;font-size:11.5px;color:#111;letter-spacing:-0.114px;left:778.30px;">12/31/</span>
<span id="t10" class="t" style="top:81px;font-size:11.5px;color:#111;letter-spacing:-0.133px;left:925.80px;">Frequency:</span>
<span id="t11" class="t" style="top:81px;font-size:11.5px;color:#111;letter-spacing:0.058px;left:993.40px;">DA - Daily</span>
<span id="t12" class="t" style="top:110px;font-size:11.5px;color:#111;letter-spacing:0.123px;left:52.70px;">Code:</span>
<span id="t13" class="t" style="top:110px;font-size:11.5px;color:#111;letter-spacing:-0.964px;left:97.00px;">DEECLE03</span>
<span id="t14" class="t" style="top:110px;font-size:11.5px;color:#111;letter-spacing:-0.035px;left:277.60px;">Name:</span>
<span id="t15" class="t" style="top:110px;font-size:11.5px;color:#111;letter-spacing:-0.823px;left:325.60px;">BROGRA-AAAEVE</span>
<span id="t16" class="t" style="top:110px;font-size:11.5px;color:#111;letter-spacing:-0.123px;left:416.10px;">Weekdays</span>
<span id="t17" class="t" style="top:118px;font-size:11.5px;color:#111;letter-spacing:-0.198px;word-spacing:0.598px;left:924.60px;">Routes Per Day:</span>
<span id="t18" class="t" style="top:118px;font-size:11.5px;color:#111;right:120.40px;">1</span>
<span id="t19" class="t" style="top:100px;font-size:11.5px;color:#111;letter-spacing:0.080px;left:1082.80px;">Days of Month</span>
<span id="t20" class="t" style="top:118px;font-size:11.5px;color:#111;right:86.20px;">0</span>
<span id="t21" class="t" style="top:118px;font-size:11.5px;color:#111;right:58.20px;">0</span>
<span id="t22" class="t" style="top:118px;font-size:11.5px;color:#111;right:30.20px;">0</span>
<span id="t23" class="t" style="top:143px;font-size:11.5px;color:#111;letter-spacing:0.189px;left:48.80px;">Origin:</span>
<span id="t24" class="t" style="top:143px;font-size:11.5px;color:#111;letter-spacing:-0.857px;left:97.60px;">BROGRA</span>
<span id="t25" class="t" style="top:144px;font-size:11.5px;color:#111;letter-spacing:-0.860px;word-spacing:1.260px;left:249.70px;">BROOKDALE AUTO SUPPLIER</span>
<span id="t26" class="t" style="top:136px;font-size:11.5px;color:#111;letter-spacing:0.154px;left:595.30px;">Bill of</span>
<span id="t27" class="t" style="top:149px;font-size:11.5px;color:#111;letter-spacing:0.272px;left:595.30px;height:9.60px;overflow:hidden;">Lading #</span>
<span id="t28" class="t" style="top:144px;font-size:11.5px;color:#111;letter-spacing:0.265px;left:882.90px;">Ref</span>
<span id="t29" class="t" style="top:172px;font-size:11.5px;color:#111;letter-spacing:0.155px;left:21.40px;">Destination:</span>
<span id="t30" class="t" style="top:172px;font-size:11.5px;color:#111;letter-spacing:-0.805px;left:97.60px;">AAAEVE</span>
<span id="t31" class="t" style="top:173px;font-size:11.5px;color:#111;letter-spacing:-0.724px;word-spacing:1.124px;left:249.70px;">AAA AUTOMOTIVE PARTS</span>
<span id="t32" class="t" style="top:172px;font-size:11.5px;color:#111;letter-spacing:-0.053px;word-spacing:0.453px;left:570.90px;">Master Order:</span>
<span id="t33" class="t" style="top:172px;font-size:11.5px;color:#111;letter-spacing:-0.348px;left:655.00px;">1854</span>
<span id="t34" class="t" style="top:206px;font-size:11.5px;color:#111;letter-spacing:-0.128px;word-spacing:0.528px;left:22.40px;">Rev Type 1:</span>
<span id="t35" class="t" style="top:206px;font-size:11.5px;color:#111;letter-spacing:-0.225px;word-spacing:0.625px;left:95.50px;">Cleveland, OH</span>
<span id="t36" class="t" style="top:234px;font-size:11.5px;color:#111;letter-spacing:-0.128px;word-spacing:0.528px;left:22.40px;">Rev Type 2:</span>
<span id="t37" class="t" style="top:234px;font-size:11.5px;color:#111;letter-spacing:0.064px;left:95.50px;">Van</span>
<span id="t38" class="t" style="top:206px;font-size:11.5px;color:#111;letter-spacing:-0.128px;word-spacing:0.528px;left:250.60px;">Rev Type 3:</span>
<span id="t39" class="t" style="top:206px;font-size:11.5px;color:#111;letter-spacing:0.021px;left:324.40px;">Full Load</span>
<span id="t40" class="t" style="top:234px;font-size:11.5px;color:#111;letter-spacing:-0.128px;word-spacing:0.528px;left:250.60px;">Rev Type 4:</span>
<span id="t41" class="t" style="top:234px;font-size:11.5px;color:#111;letter-spacing:-0.529px;left:324.90px;">UNKNOWN</span>
<span id="t42" class="t" style="top:206px;font-size:11.5px;color:#111;letter-spacing:0.335px;left:726.20px;">Priority:</span>
<span id="t43" class="t" style="top:206px;font-size:11.5px;color:#111;letter-spacing:-0.500px;left:778.40px;">UNKNOWN</span>
<span id="t44" class="t" style="top:273px;font-size:11.5px;color:#111;letter-spacing:0.125px;left:44.00px;">Tractor:</span>
<span id="t45" class="t" style="top:273px;font-size:11.5px;color:#111;letter-spacing:-0.500px;left:97.40px;">UNKNOWN</span>
<span id="t46" class="t" style="top:301px;font-size:11.5px;color:#111;letter-spacing:-0.130px;left:46.90px;">Carrier:</span>
<span id="t47" class="t" style="top:301px;font-size:11.5px;color:#111;letter-spacing:-0.500px;left:97.40px;">UNKNOWN</span>
<span id="t48" class="t" style="top:271px;font-size:11.5px;color:#111;letter-spacing:0.175px;left:276.70px;">Driver:</span>
<span id="t49" class="t" style="top:271px;font-size:11.5px;color:#111;letter-spacing:-0.500px;left:326.80px;">UNKNOWN</span>
<span id="t50" class="t" style="top:301px;font-size:11.5px;color:#111;letter-spacing:0.172px;left:266.70px;">Driver 2:</span>
<span id="t51" class="t" style="top:301px;font-size:11.5px;color:#111;letter-spacing:-0.500px;left:326.80px;">UNKNOWN</span>
<span id="t52" class="t" style="top:273px;font-size:11.5px;color:#111;letter-spacing:0.193px;left:530.70px;">Trailer:</span>
<span id="t53" class="t" style="top:273px;font-size:11.5px;color:#111;letter-spacing:-0.500px;left:581.80px;">UNKNOWN</span>
<span id="t54" class="t" style="top:303px;font-size:11.5px;color:#111;letter-spacing:0.025px;left:522.70px;">Trailer 2:</span>
<span id="t55" class="t" style="top:303px;font-size:11.5px;color:#111;letter-spacing:-0.500px;left:581.80px;">UNKNOWN</span>
<span id="t56" class="t" style="top:147px;font-size:11.5px;color:#111;letter-spacing:0.060px;left:1005.40px;">Days of Week</span>
<span id="t57" class="t" style="top:167px;font-size:11.5px;color:#8a8a8a;left:907.1px;width:100px;text-align:center;">S</span>
<span id="t58" class="t" style="top:167px;font-size:11.5px;color:#8a8a8a;left:938px;width:100px;text-align:center;">M</span>
<span id="t59" class="t" style="top:167px;font-size:11.5px;color:#111;left:969.2px;width:100px;text-align:center;">T</span>
<span id="t60" class="t" style="top:167px;font-size:11.5px;color:#111;left:999.5px;width:100px;text-align:center;">W</span>
<span id="t61" class="t" style="top:167px;font-size:11.5px;color:#111;left:1030.6px;width:100px;text-align:center;">Th</span>
<span id="t62" class="t" style="top:167px;font-size:11.5px;color:#111;left:1061.8px;width:100px;text-align:center;">F</span>
<span id="t63" class="t" style="top:167px;font-size:11.5px;color:#111;left:1093.2px;width:100px;text-align:center;">Sat</span>
<span id="t64" class="t" style="top:215px;font-size:11.5px;color:#6a6a6a;left:939.20px;">1</span>
<span id="t65" class="t" style="top:246px;font-size:11.5px;color:#6a6a6a;left:939.20px;">2</span>
<span id="t66" class="t" style="top:277px;font-size:11.5px;color:#6a6a6a;left:939.20px;">3</span>
<span id="t67" class="t" style="top:308px;font-size:11.5px;color:#6a6a6a;left:939.20px;">4</span>
<span id="t68" class="t" style="top:339px;font-size:11.5px;color:#6a6a6a;left:939.20px;">5</span>
<span id="t69" class="t" style="top:37px;font-size:22px;color:#000;font-weight:bold;letter-spacing:0.062px;left:427.85px;">Route lookup</span>
<span id="t70" class="t" style="top:336px;font-size:22px;color:#000;font-weight:bold;letter-spacing:0.012px;left:338.85px;">Route information and schedule</span>
<span id="t71" class="t" style="top:401px;font-size:11.5px;color:#000;font-weight:bold;letter-spacing:0.189px;left:42.50px;">Stops</span>
<span id="t72" class="t" style="top:401px;font-size:11.5px;color:#111;letter-spacing:0.229px;left:109.20px;">Freight</span>
<span id="t73" class="t" style="top:419px;font-size:11.5px;color:#111;letter-spacing:0.156px;left:14.70px;">Stops</span>
<span id="t74" class="t u" style="top:444px;font-size:11.5px;color:#7e7e7e;letter-spacing:0.296px;left:38.40px;">Add Stop</span>
<span id="t75" class="t u" style="top:444px;font-size:11.5px;color:#7e7e7e;letter-spacing:0.189px;left:137.10px;">Insert Stop</span>
<span id="t76" class="t u" style="top:444px;font-size:11.5px;color:#7e7e7e;letter-spacing:0.117px;left:234.40px;">Delete Stop</span>
<span id="t77" class="t ub" style="top:444px;font-size:11.5px;color:#0a0af0;letter-spacing:0.213px;left:392.60px;">Add Freight</span>
<span id="t78" class="t u" style="top:444px;font-size:11.5px;color:#7e7e7e;letter-spacing:0.155px;left:500.20px;">Delete Freight</span>
<span id="t79" class="t u" style="top:445px;font-size:11.5px;color:#7e7e7e;letter-spacing:0.208px;left:1143.90px;">Map</span>
<span id="t80" class="t" style="top:480px;font-size:11.5px;color:#000;font-weight:bold;letter-spacing:0.000px;left:71.40px;">A</span>
<span id="t81" class="t" style="top:480px;font-size:11.5px;color:#000;font-weight:bold;letter-spacing:0.074px;left:102.10px;">Event</span>
<span id="t82" class="t" style="top:480px;font-size:11.5px;color:#000;font-weight:bold;letter-spacing:0.000px;left:219.00px;">E</span>
<span id="t83" class="t" style="top:480px;font-size:11.5px;color:#000;font-weight:bold;letter-spacing:0.111px;left:248.70px;">Company ID</span>
<span id="t84" class="t" style="top:480px;font-size:11.5px;color:#000;font-weight:bold;letter-spacing:0.211px;left:353.70px;">Primary Order</span>
<span id="t85" class="t" style="top:480px;font-size:11.5px;color:#000;font-weight:bold;letter-spacing:0.180px;left:469.00px;">IsPayable</span>
<span id="t86" class="t" style="top:480px;font-size:11.5px;color:#000;font-weight:bold;letter-spacing:0.165px;left:558.60px;">Company Name</span>
<span id="t87" class="t" style="top:480px;font-size:11.5px;color:#000;font-weight:bold;letter-spacing:0.038px;left:682.80px;">Address</span>
<span id="t88" class="t" style="top:480px;font-size:11.5px;color:#000;font-weight:bold;letter-spacing:0.099px;left:779.40px;">Address 2</span>
<span id="t89" class="t" style="top:480px;font-size:11.5px;color:#000;font-weight:bold;letter-spacing:0.066px;left:876.40px;">City</span>
<span id="t90" class="t" style="top:480px;font-size:11.5px;color:#000;font-weight:bold;letter-spacing:0.555px;left:993.60px;">State</span>
<span id="t91" class="t" style="top:480px;font-size:11.5px;color:#000;font-weight:bold;letter-spacing:0.058px;left:1110.50px;">Zipcode</span>
<span id="t92" class="t" style="top:504px;font-size:11.5px;color:#000;left:34.40px;">1</span>
<span id="t93" class="t" style="top:502px;font-size:11.5px;color:#111;letter-spacing:-0.636px;left:98.90px;">LLD</span>
<span id="t94" class="t" style="top:502px;font-size:11.5px;color:#111;letter-spacing:-0.991px;left:247.90px;">BROGRA</span>
<span id="t95" class="t" style="top:502px;font-size:11.5px;color:#111;left:351.30px;">0</span>
<span id="t96" class="t" style="top:502px;font-size:11.5px;color:#111;letter-spacing:-0.760px;word-spacing:1.160px;left:557.60px;">BROOKDALE AUTO S...</span>
<span id="t97" class="t" style="top:502px;font-size:11.5px;color:#111;letter-spacing:-0.234px;word-spacing:0.634px;left:681.80px;">7235 Brooklyn...</span>
<span id="t98" class="t" style="top:502px;font-size:11.5px;color:#111;letter-spacing:-0.528px;word-spacing:0.928px;left:876.10px;">GRAND RAPIDS,MI/</span>
<span id="t99" class="t" style="top:502px;font-size:11.5px;color:#111;letter-spacing:-0.104px;left:990.90px;">Michigan</span>
<span id="t100" class="t" style="top:502px;font-size:11.5px;color:#111;letter-spacing:-0.357px;left:1110.00px;">49501</span>
<span id="t101" class="t" style="top:523px;font-size:11.5px;color:#000;left:34.40px;">2</span>
<span id="t102" class="t" style="top:521px;font-size:11.5px;color:#111;letter-spacing:-0.303px;left:98.90px;">LUL</span>
<span id="t103" class="t" style="top:521px;font-size:11.5px;color:#111;letter-spacing:-0.889px;left:247.90px;">AAAEVE</span>
<span id="t104" class="t" style="top:521px;font-size:11.5px;color:#111;left:351.30px;">0</span>
<span id="t105" class="t" style="top:521px;font-size:11.5px;color:#111;letter-spacing:-0.467px;word-spacing:0.867px;left:557.60px;">AAA AUTOMOTIVE P...</span>
<span id="t106" class="t" style="top:521px;font-size:11.5px;color:#111;letter-spacing:-0.215px;word-spacing:0.615px;left:681.80px;">Hwy 84 West</span>
<span id="t107" class="t" style="top:521px;font-size:11.5px;color:#111;letter-spacing:-0.940px;left:876.10px;">EVERGREEN,AL/CON</span>
<span id="t108" class="t" style="top:521px;font-size:11.5px;color:#111;letter-spacing:-0.213px;left:990.90px;">Alabama</span>
<span id="t109" class="t" style="top:521px;font-size:11.5px;color:#111;letter-spacing:-0.357px;left:1110.00px;">36401</span>
<span id="t110" class="t" style="top:544px;font-size:22px;color:#000;font-weight:bold;letter-spacing:0.172px;left:370.15px;">Stops and freight detail</span>
<svg style="left:260px;top:26px" width="490" height="44" viewBox="260 26 490 44"><rect x="265.2" y="30.6" width="478" height="33.8" rx="5" ry="5" fill="none" stroke="#000" stroke-width="2.15"/></svg>
<svg style="left:0px;top:66px" width="1185" height="312" viewBox="0 66 1185 312"><rect x="5.5" y="72.2" width="1164.1" height="300" rx="38" ry="38" fill="none" stroke="#000" stroke-width="2"/></svg>
<svg style="left:0px;top:384px" width="1185" height="206" viewBox="0 384 1185 206"><rect x="3.4" y="389.5" width="1178.3" height="197.1" rx="25" ry="25" fill="none" stroke="#000" stroke-width="2"/></svg>
</div></body></html>
